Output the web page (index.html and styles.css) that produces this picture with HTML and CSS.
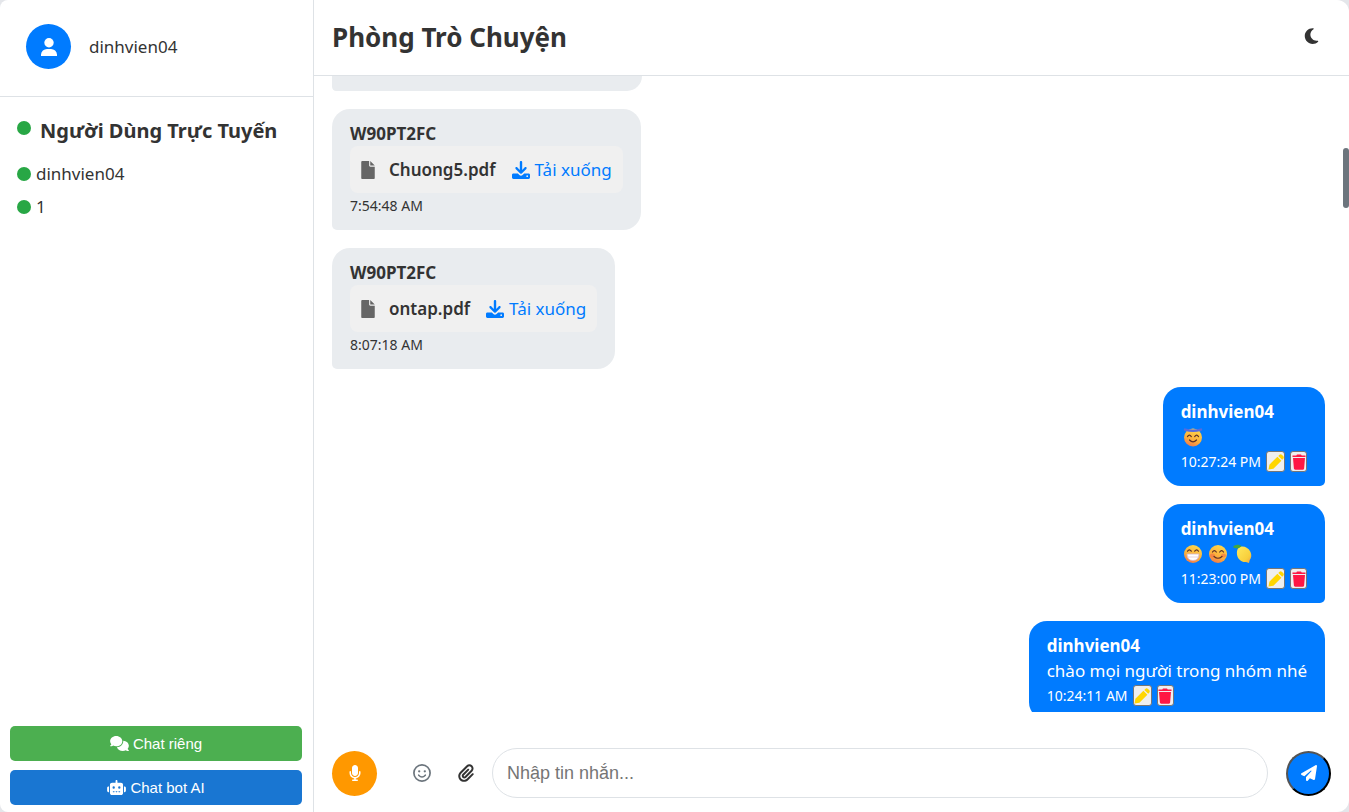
FILE: index.html
```
<!DOCTYPE html>
<html lang="vi">
<head>
<meta charset="utf-8">
<title>Phòng Trò Chuyện</title>
<link rel="stylesheet" href="styles.css">
</head>
<body>
<svg class="sprite" aria-hidden="true">
  <defs>
    <linearGradient id="face" x1="0.7" y1="0" x2="0.3" y2="1"><stop offset="0" stop-color="#ffd84a"/><stop offset="0.6" stop-color="#fbb03c"/><stop offset="1" stop-color="#f2794a"/></linearGradient>
    <linearGradient id="zest" x1="0" y1="0" x2="1" y2="1"><stop offset="0" stop-color="#ffe95c"/><stop offset="0.7" stop-color="#f8cf3c"/><stop offset="1" stop-color="#eda04a"/></linearGradient>
  </defs>
  <symbol id="user" viewBox="0 0 16 18"><circle cx="8" cy="4.700" r="4.700"/><path d="M0 18v-1.500A6 6 0 0 1 6 11h4a6 6 0 0 1 6 5.500V18z"/></symbol>
  <symbol id="moon" viewBox="0 0 384 512"><path d="M223.500 32C100 32 0 132.300 0 256s100 224 223.500 224c60.600 0 115.500-24.200 155.800-63.400 5-4.900 6.300-12.500 3.100-18.700s-10.100-9.700-17-8.500c-9.800 1.700-19.800 2.600-30.100 2.600-96.900 0-175.500-78.800-175.500-176 0-65.800 36-123.100 89.300-153.300 6.100-3.500 9.200-10.500 7.700-17.300s-7.300-11.900-14.300-12.500c-6.300-.5-12.600-.8-19-.8z"/></symbol>
  <symbol id="file" viewBox="0 0 384 512"><path d="M0 32C0 14 14 0 32 0h192v128c0 17.700 14.300 32 32 32h128v320c0 18-14 32-32 32H32c-18 0-32-14-32-32zm384 96H256V0l128 128z"/></symbol>
  <symbol id="download" viewBox="0 0 512 512"><path d="M290 32c0-17.700-14.300-32-34-32s-34 14.300-34 32v222l-73.400-73.400c-12.500-12.500-32.800-12.500-45.300 0s-12.500 32.800 0 45.300l130 130c12.500 12.500 32.800 12.500 45.300 0l130-130c12.500-12.500 12.500-32.800 0-45.300s-32.800-12.500-45.300 0L290 254zM40 352c-22 0-40 18-40 40v80c0 22 18 40 40 40h432c22 0 40-18 40-40v-80c0-22-18-40-40-40H346.500l-45.300 45.300c-25 25-65.500 25-90.500 0L165.500 352zm392 56a24 24 0 1 1 0 48 24 24 0 1 1 0-48z"/></symbol>
  <symbol id="comments" viewBox="0 0 640 512"><path d="M208 352c114.900 0 208-78.800 208-176S322.900 0 208 0 0 78.800 0 176c0 38.600 14.700 74.300 39.600 103.400-3.500 9.400-8.700 17.700-14.200 24.700-4.800 6.200-9.700 11-13.300 14.300-1.800 1.600-3.300 2.900-4.300 3.700l-1.300 1C.6 327.200-1.400 334.400.8 340.900S9.100 352 16 352c21.800 0 43.800-5.600 62.100-12.500 9.200-3.500 17.800-7.400 25.300-11.400C134.100 343.300 169.800 352 208 352zM448 176c0 112.300-99.100 196.900-216.500 207C255.800 457.400 336.400 512 432 512c38.200 0 73.900-8.700 104.700-23.900 7.500 4 16 7.900 25.200 11.400 18.300 6.900 40.300 12.500 62.100 12.500 6.900 0 13.100-4.500 15.200-11.100 2.100-6.600-.2-13.800-5.800-17.900l-1.300-1c-1-.8-2.500-2-4.300-3.700-3.600-3.300-8.500-8.100-13.300-14.300-5.500-7-10.700-15.400-14.200-24.700 24.900-29 39.600-64.700 39.600-103.400 0-92.800-84.900-168.900-192.600-175.500.4 5.100.6 10.300.6 15.500z"/></symbol>
  <symbol id="robot" viewBox="0 0 640 512"><path fill-rule="evenodd" d="M320 0c17.700 0 32 14.300 32 32v64h120c39.800 0 72 32.200 72 72v272c0 39.800-32.200 72-72 72H168c-39.800 0-72-32.200-72-72V168c0-39.800 32.200-72 72-72h120V32c0-17.700 14.300-32 32-32zM208 384c-8.800 0-16 7.200-16 16s7.200 16 16 16h32c8.800 0 16-7.200 16-16s-7.200-16-16-16h-32zm96 0c-8.800 0-16 7.200-16 16s7.200 16 16 16h32c8.800 0 16-7.200 16-16s-7.200-16-16-16h-32zm96 0c-8.800 0-16 7.200-16 16s7.200 16 16 16h32c8.800 0 16-7.200 16-16s-7.200-16-16-16h-32zM264 256a40 40 0 1 0-80 0 40 40 0 1 0 80 0zm152 40a40 40 0 1 0 0-80 40 40 0 1 0 0 80zM48 224h16v192H48c-26.500 0-48-21.500-48-48v-96c0-26.500 21.500-48 48-48zm544 0c26.500 0 48 21.500 48 48v96c0 26.500-21.500 48-48 48h-16V224h16z"/></symbol>
  <symbol id="mic" viewBox="0 0 384 512"><path d="M192 0c-53 0-96 43-96 96v160c0 53 43 96 96 96s96-43 96-96V96c0-53-43-96-96-96zM64 216c0-13.300-10.700-24-24-24s-24 10.700-24 24v40c0 89.100 66.200 162.700 152 174.400V464h-48c-13.300 0-24 10.700-24 24s10.700 24 24 24h144c13.300 0 24-10.700 24-24s-10.700-24-24-24h-48v-33.600c85.800-11.700 152-85.300 152-174.400v-40c0-13.300-10.700-24-24-24s-24 10.700-24 24v40c0 70.700-57.300 128-128 128S64 326.700 64 256v-40z"/></symbol>
  <symbol id="smile" viewBox="0 0 18 18"><circle cx="9" cy="9" r="8.100" fill="none" stroke="currentColor" stroke-width="1.700"/><circle cx="6.200" cy="7.300" r="1.150"/><circle cx="11.800" cy="7.300" r="1.150"/><path d="M5.700 11.200q3.300 3.600 6.600 0" fill="none" stroke="currentColor" stroke-width="1.600" stroke-linecap="round"/></symbol>
  <symbol id="clip" viewBox="0 0 448 512"><path d="M364.200 83.800c-24.400-24.400-64-24.400-88.400 0l-184 184c-42.100 42.100-42.100 110.300 0 152.400s110.300 42.100 152.400 0l152-152c10.900-10.900 28.700-10.900 39.600 0s10.900 28.700 0 39.600l-152 152c-64 64-167.600 64-231.600 0s-64-167.600 0-231.600l184-184c46.300-46.300 121.300-46.300 167.600 0s46.300 121.300 0 167.600l-176 176c-28.600 28.600-75 28.600-103.600 0s-28.600-75 0-103.600l144-144c10.900-10.900 28.700-10.900 39.600 0s10.900 28.700 0 39.600l-144 144c-6.700 6.700-6.700 17.700 0 24.400s17.700 6.700 24.400 0l176-176c24.400-24.400 24.400-64 0-88.400z"/></symbol>
  <symbol id="plane" viewBox="0 0 512 512"><path d="M498.100 5.600c10.100 7 15.400 19.100 13.500 31.200l-64 416c-1.500 9.700-7.400 18.200-16 23s-18.900 5.400-28 1.600L284 427.700l-68.500 74.100c-8.900 9.700-22.900 12.900-35.200 8.100S160 493.200 160 480v-83.600c0-4 1.500-7.800 4.200-10.800l167.600-182.800c5.800-6.300 5.600-16-.4-22s-15.700-6.400-22-.7L106 360.800 17.700 316.600C7.100 311.300.3 300.700 0 288.900s5.900-22.800 16.100-28.700l448-256c10.700-6.100 23.900-5.500 34 1.400z"/></symbol>
  <symbol id="pencil" viewBox="0 0 16 16"><path d="M.5 15.500l.9-4.800 8-8 4 4-8 8zM10.300 1.900l1-1c.8-.8 1.900-.8 2.700 0l1.200 1.200c.8.800.8 1.900 0 2.700l-1 1z"/></symbol>
  <symbol id="trash" viewBox="0 0 14 16"><path d="M.5 1.400H4.300L5 .4h4l.7 1h3.800v1.700H.5zM1 4h12l-.9 10.600c-.1.800-.6 1.200-1.300 1.200H3.200c-.7 0-1.200-.4-1.300-1.200z"/></symbol>
  <symbol id="angel" viewBox="0 0 20 20"><circle cx="10" cy="10.500" r="9" fill="url(#face)"/><path d="M2 2.600Q10 5 18 2.600" fill="none" stroke="#566bdc" stroke-width="2.400" stroke-linecap="round"/><path d="M4.500 9.600q1.800-2.800 3.800 0M11.700 9.600q2-2.800 3.800 0M6.500 13q3.500 3.800 7 0" fill="none" stroke="#5c3027" stroke-width="1.200" stroke-linecap="round"/></symbol>
  <symbol id="grin" viewBox="0 0 20 20"><circle cx="10" cy="10" r="9" fill="url(#face)"/><path d="M4.500 7.200q1.800-2.800 3.800 0M11.700 7.200q2-2.800 3.800 0" fill="none" stroke="#5c3027" stroke-width="1.200" stroke-linecap="round"/><path d="M4 10h12q0 6.500-6 6.500T4 10z" fill="#fff" stroke="#d6b4c9" stroke-width=".8"/><path d="M4.500 13h11" stroke="#d6b4c9" stroke-width=".6"/></symbol>
  <symbol id="blush" viewBox="0 0 20 20"><circle cx="10" cy="10" r="9" fill="url(#face)"/><ellipse cx="4.500" cy="11.500" rx="2.500" ry="2" fill="#f36f45" opacity=".6"/><ellipse cx="15.500" cy="11.500" rx="2.500" ry="2" fill="#f36f45" opacity=".6"/><path d="M4.500 8q1.800-2.800 3.800 0M11.700 8q2-2.800 3.800 0M6 12.500q4 3.500 8 0" fill="none" stroke="#5c3027" stroke-width="1.200" stroke-linecap="round"/></symbol>
  <symbol id="lemon" viewBox="0 0 20 20"><path d="M5 4.500C8 1 15 2.500 17.500 8c1.500 3.500.8 6-.8 8l-.7 3-3-1C8.500 18.500 4.500 15 4 10.500c-.3-2.500 0-4.500 1-6z" fill="url(#zest)"/><path d="M0 3C2 0 6 .3 8.500 2 6.500 4.500 3.500 5.500 0 3z" fill="#43a63c"/></symbol>
</svg>

<div class="app">
  <aside class="sidebar">
    <div class="profile">
      <span class="avatar"><svg class="icon-user"><use href="#user"/></svg></span>
      <span>dinhvien04</span>
    </div>
    <section class="online">
      <h2 class="online-title"><span class="dot"></span>Người Dùng Trực Tuyến</h2>
      <ul class="online-list">
        <li><span class="dot"></span>dinhvien04</li>
        <li><span class="dot"></span>1</li>
      </ul>
    </section>
    <div class="actions">
      <button class="action action-private" type="button"><svg class="icon-action"><use href="#comments"/></svg>Chat riêng</button>
      <button class="action action-bot" type="button"><svg class="icon-action"><use href="#robot"/></svg>Chat bot AI</button>
    </div>
  </aside>

  <main class="chat">
    <header class="chat-header">
      <h1>Phòng Trò Chuyện</h1>
      <button class="theme" type="button" aria-label="Chế độ tối"><svg class="icon-moon"><use href="#moon"/></svg></button>
    </header>

    <div class="viewport">
      <div class="messages">
        <div class="message message-cut"></div>
        <article class="message">
          <strong>W90PT2FC</strong>
          <div class="file">
            <svg class="icon-file"><use href="#file"/></svg>
            <span class="file-name">Chuong5.pdf</span>
            <a href="#Chuong5.pdf"><svg class="icon-download"><use href="#download"/></svg>Tải xuống</a>
          </div>
          <div class="meta"><time>7:54:48 AM</time></div>
        </article>
        <article class="message">
          <strong>W90PT2FC</strong>
          <div class="file">
            <svg class="icon-file"><use href="#file"/></svg>
            <span class="file-name">ontap.pdf</span>
            <a href="#ontap.pdf"><svg class="icon-download"><use href="#download"/></svg>Tải xuống</a>
          </div>
          <div class="meta"><time>8:07:18 AM</time></div>
        </article>
        <article class="message own">
          <strong>dinhvien04</strong>
          <div class="emojis"><svg class="emoji"><use href="#angel"/></svg></div>
          <div class="meta"><time>10:27:24 PM</time>
            <button class="tool edit" type="button" aria-label="Sửa"><svg class="icon-pencil"><use href="#pencil"/></svg></button>
            <button class="tool delete" type="button" aria-label="Xóa"><svg class="icon-trash"><use href="#trash"/></svg></button></div>
        </article>
        <article class="message own">
          <strong>dinhvien04</strong>
          <div class="emojis"><svg class="emoji"><use href="#grin"/></svg><svg class="emoji"><use href="#blush"/></svg><svg class="emoji"><use href="#lemon"/></svg></div>
          <div class="meta"><time>11:23:00 PM</time>
            <button class="tool edit" type="button" aria-label="Sửa"><svg class="icon-pencil"><use href="#pencil"/></svg></button>
            <button class="tool delete" type="button" aria-label="Xóa"><svg class="icon-trash"><use href="#trash"/></svg></button></div>
        </article>
        <article class="message own">
          <strong>dinhvien04</strong>
          <div>chào mọi người trong nhóm nhé</div>
          <div class="meta"><time>10:24:11 AM</time>
            <button class="tool edit" type="button" aria-label="Sửa"><svg class="icon-pencil"><use href="#pencil"/></svg></button>
            <button class="tool delete" type="button" aria-label="Xóa"><svg class="icon-trash"><use href="#trash"/></svg></button></div>
        </article>
      </div>
      <div class="track"><div class="thumb"></div></div>
    </div>

    <form class="composer">
      <button class="round record" type="button" aria-label="Ghi âm"><svg class="icon-mic"><use href="#mic"/></svg></button>
      <div class="extras">
        <button class="plain smile" type="button" aria-label="Biểu tượng cảm xúc"><svg class="icon-smile"><use href="#smile"/></svg></button>
        <button class="plain" type="button" aria-label="Đính kèm"><svg class="icon-clip"><use href="#clip"/></svg></button>
      </div>
      <input class="entry" type="text" placeholder="Nhập tin nhắn..." aria-label="Nhập tin nhắn">
      <button class="round send" type="submit" aria-label="Gửi"><svg class="icon-plane"><use href="#plane"/></svg></button>
    </form>
  </main>
</div>
</body>
</html>
```
FILE: styles.css
```
* { box-sizing: border-box; }

body {
  margin: 0;
  background: #e4e6ea;
  color: #333;
  font-family: "Noto Sans", "Open Sans", sans-serif;
  font-size: 17px;
  line-height: 25px;
}

h1, h2, ul { margin: 0; padding: 0; }
svg { display: block; fill: currentColor; flex: none; }
button { font-family: inherit; color: inherit; padding: 0; cursor: pointer; }
.sprite { position: absolute; width: 0; height: 0; }

.app {
  display: flex;
  height: 100vh;
  background: #fff;
  border-radius: 8px 12px 12px 8px;
  overflow: hidden;
}

/* Sidebar */
.sidebar {
  flex: none;
  display: flex;
  flex-direction: column;
  width: 314px;
  border-right: 1px solid #dee2e6;
}
.profile {
  display: flex;
  align-items: center;
  gap: 18px;
  padding: 24px 26px 27px;
  border-bottom: 1px solid #dee2e6;
}
.avatar {
  display: grid;
  place-items: center;
  width: 45px;
  height: 45px;
  border-radius: 50%;
  background: #007bff;
  color: #fff;
}
.icon-user { width: 16px; height: 18px; }
.online { flex: 1; padding: 18px 17px; }
.online-title {
  display: flex;
  align-items: center;
  gap: 9px;
  font-size: 20px;
  line-height: 32px;
}
.online-title .dot { margin-bottom: 6px; }
.dot {
  flex: none;
  width: 14px;
  height: 14px;
  border-radius: 50%;
  background: #28a745;
}
.online-list {
  display: grid;
  gap: 8px;
  margin-top: 14px;
  list-style: none;
}
.online-list li { display: flex; align-items: center; gap: 5px; }
.actions {
  display: grid;
  gap: 9px;
  padding: 0 11px 7px 10px;
}
.action {
  display: flex;
  align-items: center;
  justify-content: center;
  gap: 4px;
  height: 35px;
  border: 0;
  border-radius: 5px;
  color: #fff;
  font-family: "Liberation Sans", sans-serif;
  font-size: 15px;
}
.action-private { background: #4caf50; }
.action-bot { background: #1976d2; }
.icon-action { width: 19px; height: 15px; }

/* Chat */
.chat { flex: 1; min-width: 0; display: flex; flex-direction: column; }
.chat-header {
  display: flex;
  align-items: center;
  justify-content: space-between;
  padding: 18px 30px 18px 18px;
  border-bottom: 1px solid #dee2e6;
}
.chat-header h1 { font-size: 26px; line-height: 39px; }
.theme { padding-bottom: 3px; border: 0; background: none; }
.icon-moon { width: 15px; height: 18px; }

.viewport { flex: 1; min-height: 0; display: flex; }
.messages {
  flex: 1;
  display: flex;
  flex-direction: column;
  align-items: flex-start;
  gap: 18px;
  padding: 0 18px;
  overflow: hidden;
}
.track { width: 6px; padding-top: 72px; }
.thumb { height: 60px; border-radius: 3px; background: #6c757d; }

.message {
  flex: none;
  padding: 12px 18px;
  border-radius: 18px 18px 18px 5px;
  background: #e9ecef;
}
.message strong { display: block; }
.message-cut {
  width: 310px;
  height: 15px;
  padding: 0;
  border-radius: 0 0 18px 5px;
}
.own {
  align-self: flex-end;
  border-radius: 18px 18px 5px 18px;
  background: #007bff;
  color: #fff;
}
.file {
  display: flex;
  align-items: center;
  padding: 11px;
  border-radius: 8px;
  background: #f0f0f0;
}
.file a {
  display: flex;
  align-items: center;
  gap: 5px;
  color: #007bff;
  text-decoration: none;
}
.file-name { margin: 0 16px 0 14px; font-weight: 600; }
.icon-file { width: 14px; height: 18px; color: #666; }
.icon-download { width: 18px; height: 18px; }
.meta { display: flex; align-items: center; gap: 5px; font-size: 14px; }
.emojis { display: flex; align-items: center; gap: 5px; height: 25px; padding-left: 2px; }
.emoji { width: 20px; height: 20px; }
.tool {
  display: grid;
  place-items: center;
  height: 21px;
  border: 1px solid #767676;
  border-radius: 3px;
  background: #efefef;
}
.edit { width: 19px; color: #ffd600; }
.delete { width: 17px; color: #ff1744; }
.icon-pencil { width: 16px; height: 16px; }
.icon-trash { width: 14px; height: 16px; }

/* Composer */
.composer {
  display: flex;
  align-items: center;
  gap: 18px;
  padding: 36px 18px 14px;
}
.round {
  flex: none;
  display: grid;
  place-items: center;
  width: 45px;
  height: 45px;
  border: 0;
  border-radius: 50%;
  color: #fff;
}
.record { background: #ff9800; }
.send { border: 2px outset #000; background: #007bff; }
.extras { display: flex; gap: 27px; padding-left: 18px; }
.plain { border: 0; background: none; }
.smile { color: #6c757d; }
.icon-mic { width: 12px; height: 16px; }
.icon-smile { width: 18px; height: 18px; }
.icon-clip { width: 16px; height: 18px; }
.icon-plane { width: 16px; height: 16px; }
.entry {
  flex: 1;
  min-width: 0;
  height: 50px;
  padding: 0 14px;
  border: 1px solid #dee2e6;
  border-radius: 25px;
  background: #fff;
  font-family: "Liberation Sans", sans-serif;
  font-size: 18px;
}
.entry::placeholder { color: #757575; }
```
